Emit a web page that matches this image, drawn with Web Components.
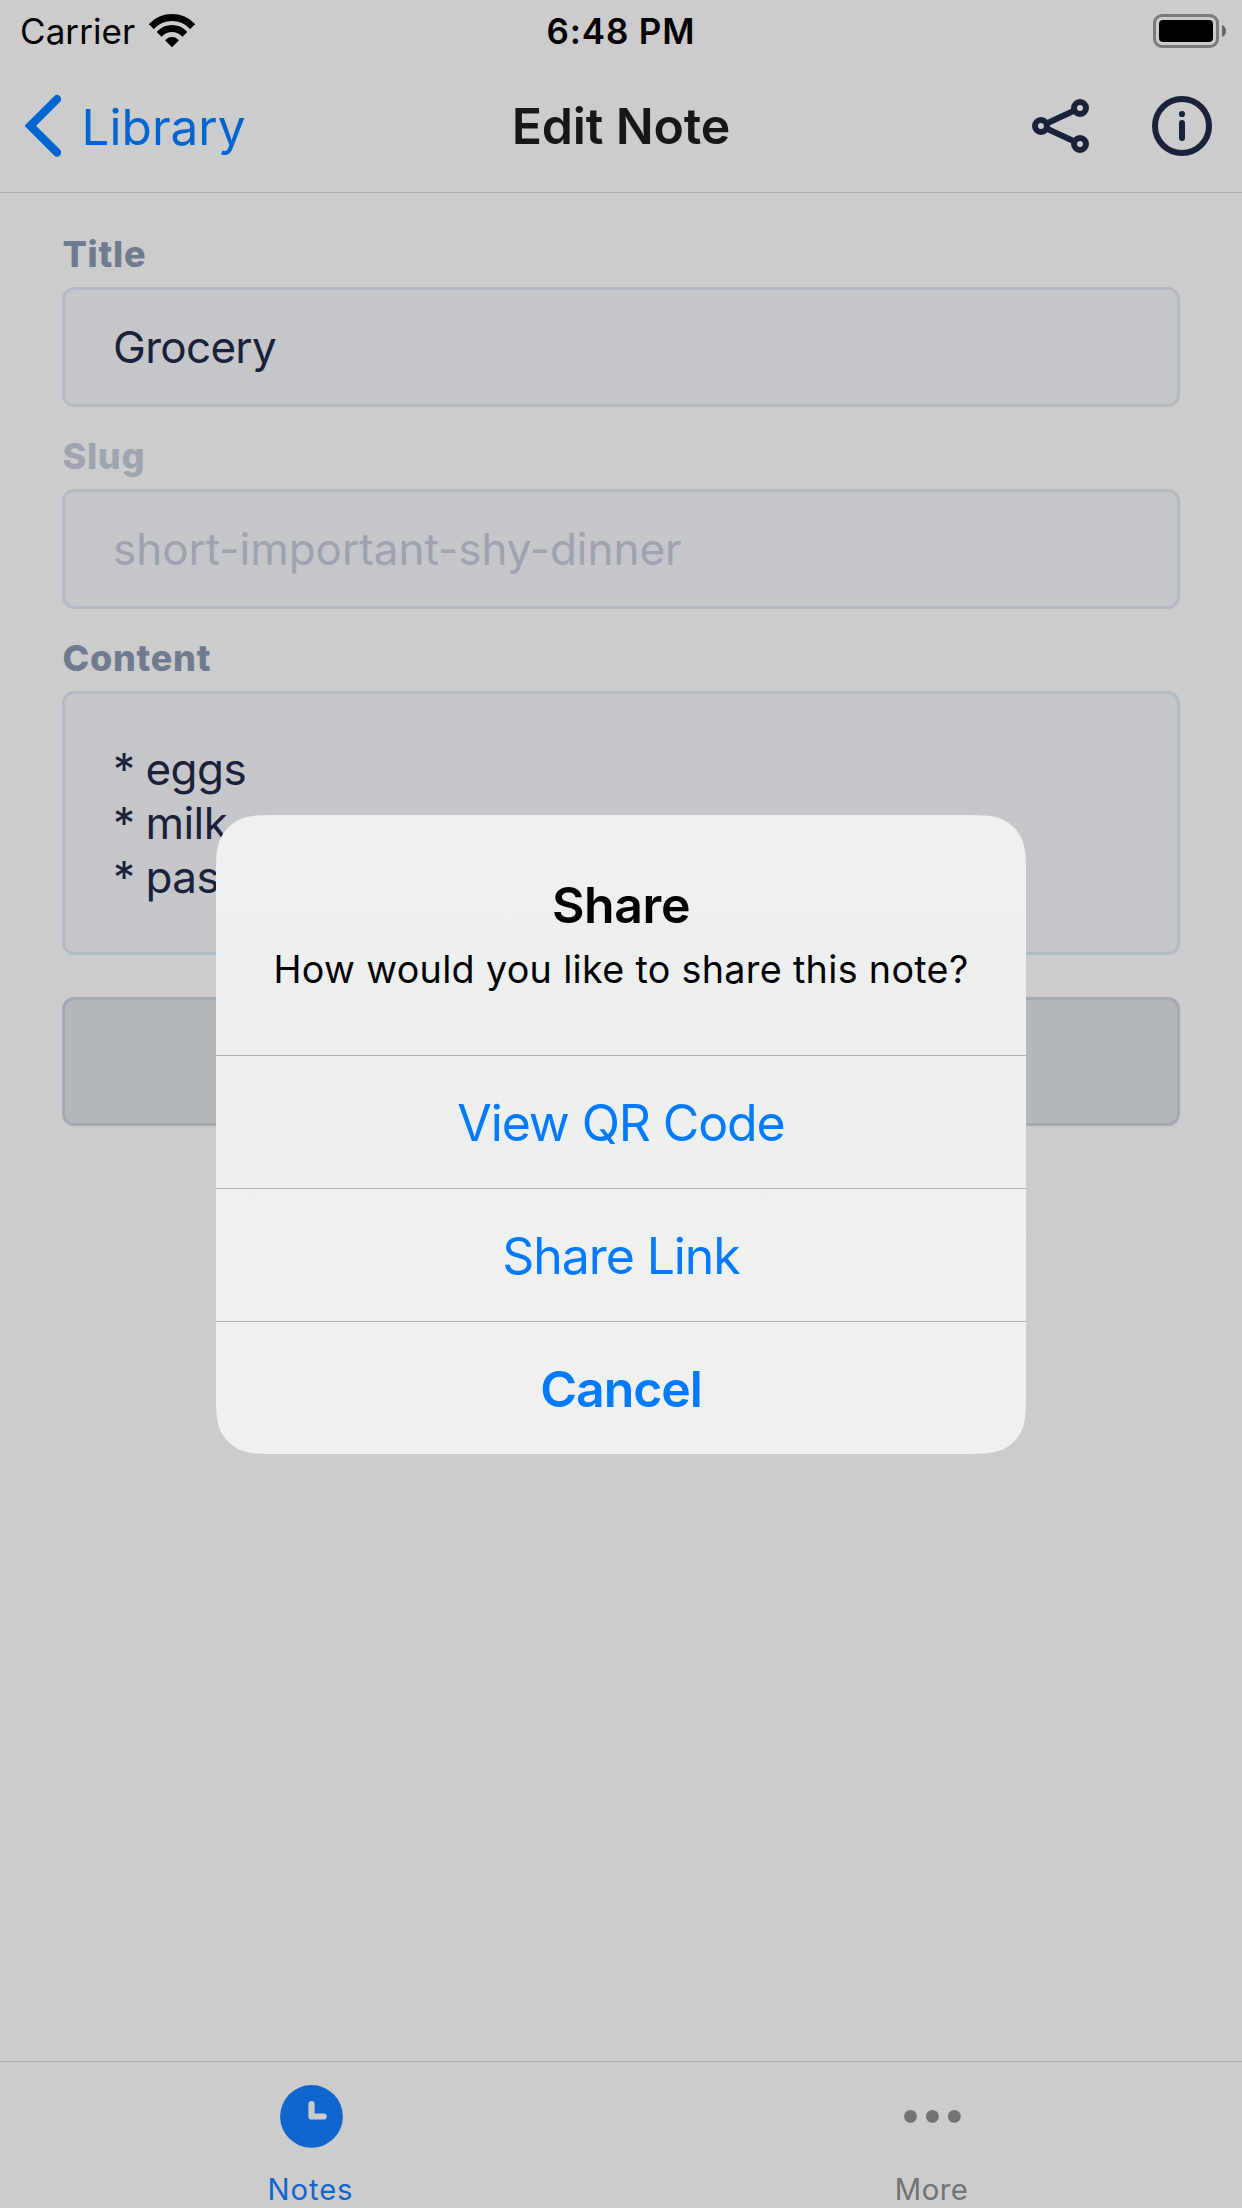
<!DOCTYPE html>
<html lang="en">
<head>
<meta charset="utf-8">
<title>Edit Note</title>
<style>
html, body { margin: 0; padding: 0; }
body {
  width: 1242px; height: 2208px; overflow: hidden; background: #ccc;
  font-family: Inter, "Liberation Sans", sans-serif; font-kerning: normal;
}
</style>
</head>
<body>
<note-app>
  <status-bar slot="top" carrier="Carrier" time="6:48 PM"></status-bar>
  <nav-bar slot="top" back="Library">Edit Note</nav-bar>
  <note-field label="Title">Grocery</note-field>
  <note-field label="Slug" disabled>short-important-shy-dinner</note-field>
  <note-field label="Content" multiline>* eggs<br>* milk<br>* pas</note-field>
  <save-button></save-button>
  <tab-bar slot="bottom">
    <tab-item active label="Notes">
      <svg width="64" height="64" viewBox="0 0 64 64"><circle cx="32.5" cy="32.4" r="31.4" fill="#1066cc"/><path d="M32.5 20.2V32.5H44.6" fill="none" stroke="#ccc" stroke-width="6.2" stroke-linecap="round" stroke-linejoin="round"/></svg>
    </tab-item>
    <tab-item label="More">
      <svg width="64" height="64" viewBox="0 0 64 64" fill="#737373"><circle cx="10.5" cy="32.4" r="6.4"/><circle cx="32.4" cy="32.4" r="6.4"/><circle cx="54.3" cy="32.4" r="6.4"/></svg>
    </tab-item>
  </tab-bar>
  <share-alert slot="overlay" heading="Share" message="How would you like to share this note?">
    <alert-action style="letter-spacing:-1.1px">View QR Code</alert-action>
    <alert-action style="letter-spacing:-1.1px">Share Link</alert-action>
    <alert-action strong style="letter-spacing:-1.1px">Cancel</alert-action>
  </share-alert>
</note-app>

<script>
const define = (name, render) => customElements.define(name, class extends HTMLElement {
  constructor() { super(); this.attachShadow({ mode: 'open' }); }
  connectedCallback() { this.shadowRoot.innerHTML = render(this); }
});

define('note-app', () => `
  <style>
    :host { display: flex; flex-direction: column; position: relative; width: 1242px; height: 2208px; background: #ccc; }
    main { flex: 1; padding: 29px 62px 0; }
    .overlay { position: absolute; inset: 0; display: flex; flex-direction: column; align-items: center; padding-top: 815px; box-sizing: border-box; }
  </style>
  <slot name="top"></slot>
  <main><slot></slot></main>
  <slot name="bottom"></slot>
  <div class="overlay"><slot name="overlay"></slot></div>`);

define('status-bar', el => `
  <style>
    :host { display: grid; grid-template-columns: 1fr auto 1fr; align-items: center; height: 60px; font-size: 35px; line-height: 62px; color: #000; }
    .left { display: flex; align-items: center; padding-left: 20px; letter-spacing: .075px; height: 62px; }
    .wifi { margin-left: 14px; }
    .time { font-weight: 600; letter-spacing: .84px; height: 62px; }
    .right { display: flex; justify-content: flex-end; padding-right: 16px; }
    svg { display: block; }
  </style>
  <div class="left"><span>${el.getAttribute('carrier')}</span>
    <svg class="wifi" width="46" height="60" viewBox="149 0 46 60">
      <defs><clipPath id="w"><path d="M172 46.2L137 11.2V0H207V11.2Z"/></clipPath></defs>
      <g clip-path="url(#w)" fill="none" stroke="#000" stroke-width="7">
        <circle cx="172" cy="44.5" r="28"/><circle cx="172" cy="44.5" r="17"/><circle cx="172" cy="44.5" r="8.5" fill="#000" stroke="none"/>
      </g>
    </svg>
  </div>
  <div class="time">${el.getAttribute('time')}</div>
  <div class="right">
    <svg width="73" height="60" viewBox="1153 0 73 60">
      <rect x="1154.5" y="14.5" width="63" height="31" rx="7.5" fill="none" stroke="#7a7a7a" stroke-width="3"/>
      <rect x="1159" y="19" width="54" height="22" rx="4" fill="#000"/>
      <path d="M1222 24C1227.3 25.6 1227.3 34.4 1222 36Z" fill="#666"/>
    </svg>
  </div>`);

define('nav-bar', el => `
  <style>
    :host { display: grid; grid-template-columns: 1fr auto 1fr; align-items: center; height: 132px; border-bottom: 1px solid #acacac; font-size: 49.5px; line-height: 64px; }
    .back { display: flex; align-items: center; padding-left: 25px; color: #0064d1; letter-spacing: .03px; }
    .back span { margin-left: 20.5px; position: relative; top: 1px; }
    .title { font-size: 50px; font-weight: 600; letter-spacing: -.15px; color: #161718; }
    .actions { display: flex; justify-content: flex-end; align-items: center; gap: 60px; padding-right: 29px; }
    svg { display: block; }
    .line { fill: none; stroke: #1a2138; stroke-width: 6; stroke-linecap: round; }
  </style>
  <div class="back">
    <svg width="36" height="64" viewBox="25 94 36 64"><path d="M57 99.1L30.3 125.8L57 152.5" fill="none" stroke="#0064d1" stroke-width="8.2" stroke-linecap="round"/></svg>
    <span>${el.getAttribute('back')}</span>
  </div>
  <div class="title"><slot></slot></div>
  <div class="actions">
    <svg width="60" height="60" viewBox="1031 96 60 60"><g class="line"><circle cx="1041" cy="126" r="6"/><circle cx="1080" cy="108" r="6"/><circle cx="1080" cy="144" r="6"/><path d="M1046.5 123.4L1074.5 110.6M1046.5 128.6L1074.5 141.4"/></g></svg>
    <svg width="62" height="62" viewBox="1151 95 62 62"><g class="line"><circle cx="1182" cy="126" r="27"/><path d="M1182 123V138"/></g><circle cx="1182" cy="114" r="3.1" fill="#1a2138"/></svg>
  </div>`);

define('note-field', el => `
  <style>
    :host { display: flex; flex-direction: column; margin-bottom: 17px; }
    :host([multiline]) { margin-bottom: 0; }
    label { font-size: 36px; line-height: 65px; height: 65px; font-weight: 800; letter-spacing: .75px; padding-left: .4px; color: #707b8f; }
    .box { box-sizing: border-box; min-height: 120px; padding: 30px 48px; border: 3px solid #b3bac4; border-radius: 12px; background: #c5c6ca; color: #1a2138; font-size: 44px; line-height: 54px; letter-spacing: -.7px; }
    :host([disabled]) label { color: #9fa4ae; }
    :host([disabled]) .box { color: #9ea3ae; letter-spacing: -.02px; }
    :host([multiline]) .box { padding: 48px; letter-spacing: -.5px; word-spacing: -1px; }
  </style>
  <label>${el.getAttribute('label')}</label>
  <div class="box"><slot></slot></div>`);

define('save-button', () => `
  <style>
    :host { display: block; box-sizing: border-box; height: 129px; margin-top: 42px; border: 3px solid #a4a9b2; border-radius: 12px; background: #b4b7bc; }
  </style>`);

define('tab-bar', () => `
  <style>
    :host { display: flex; height: 146px; border-top: 1px solid #acacac; }
    ::slotted(*) { flex: 1; }
  </style><slot></slot>`);

define('tab-item', el => `
  <style>
    :host { display: flex; flex-direction: column; align-items: center; padding-top: 22px; color: #737373; font-size: 29.3px; line-height: 36px; letter-spacing: .4px; }
    :host([active]) { color: #1066cc; letter-spacing: .9px; }
    ::slotted(svg) { display: block; }
    span { margin-top: 24px; }
  </style>
  <slot></slot><span>${el.getAttribute('label')}</span>`);

define('share-alert', el => `
  <style>
    :host { display: flex; flex-direction: column; width: 810px; height: 639px; text-align: center;
      background: linear-gradient(180deg, #eef0f1 0, #eef0f0 18%, #edeeef 36%, #eef0f0 58%, #f0f0f0 76%, #f0f0f0 100%);
      clip-path: path("M64.2 0H745.8C764.3 0 773.5 0 783.5 3.15C794.3 7.1 802.9 15.7 806.85 26.5C810 36.5 810 45.7 810 64.2V574.8C810 593.3 810 602.5 806.85 612.5C802.9 623.3 794.3 631.9 783.5 635.85C773.5 639 764.3 639 745.8 639H64.2C45.7 639 36.5 639 26.5 635.85C15.7 631.9 7.1 623.3 3.15 612.5C0 602.5 0 593.3 0 574.8V64.2C0 45.7 0 36.5 3.15 26.5C7.1 15.7 15.7 7.1 26.5 3.15C36.5 0 45.7 0 64.2 0Z"); }
    header { display: flex; flex-direction: column; height: 240px; padding-top: 60px; box-sizing: border-box; gap: 11px; color: #000; }
    h2 { margin: 0; font-size: 50px; font-weight: 600; line-height: 60px; letter-spacing: -.4px; }
    p { margin: 0; font-size: 37.7px; line-height: 46px; letter-spacing: .322px; }
  </style>
  <header><h2>${el.getAttribute('heading')}</h2><p>${el.getAttribute('message')}</p></header>
  <slot></slot>`);

define('alert-action', () => `
  <style>
    :host { display: block; height: 132px; border-top: 1px solid #adafb0; color: #007aff; font-size: 50px; line-height: 135px; }
    :host([strong]) { font-weight: 600; }
  </style><slot></slot>`);
</script>
</body>
</html>
